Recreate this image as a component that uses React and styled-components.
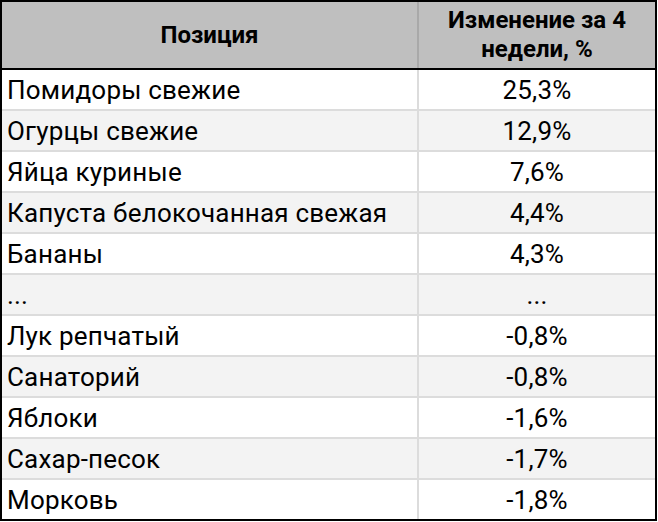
import React from "react";
import styled, { createGlobalStyle } from "styled-components";

const Global = createGlobalStyle`
  html, body { margin: 0; padding: 0; background: #fff; }
  body { font-family: Roboto, "Liberation Sans", sans-serif; }
`;

const Table = styled.div`
  width: 657px;
  box-sizing: border-box;
  border: 2px solid #000;
  display: flex;
  flex-direction: column;
  color: #000;
`;

const Row = styled.div`
  display: grid;
  grid-template-columns: 417px 1fr;
  height: ${(p) => (p.$head ? "66px" : "39px")};
  background: ${(p) => (p.$head ? "#bfbfbf" : p.$alt ? "#f3f3f3" : "#fff")};
  border-bottom: ${(p) =>
    p.$head ? "2px solid #000" : p.$last ? "none" : "2px solid #dcdcdc"};
`;

const Cell = styled.div`
  display: flex;
  align-items: center;
  justify-content: ${(p) => (p.$center ? "center" : "flex-start")};
  padding: ${(p) => (p.$center ? "0" : "0 0 0 5px")};
  border-right: ${(p) =>
    p.$divider ? `2px solid ${p.$head ? "#a9a9a9" : "#dcdcdc"}` : "none"};
  font-size: 26px;
  letter-spacing: 0.2px;
  white-space: nowrap;
`;

const HeadCell = styled(Cell)`
  font-weight: 700;
  font-size: 24px;
  letter-spacing: 0;
  line-height: 29px;
  text-align: center;
`;

const rows = [
  ["Помидоры свежие", "25,3%"],
  ["Огурцы свежие", "12,9%"],
  ["Яйца куриные", "7,6%"],
  ["Капуста белокочанная свежая", "4,4%"],
  ["Бананы", "4,3%"],
  ["...", "..."],
  ["Лук репчатый", "-0,8%"],
  ["Санаторий", "-0,8%"],
  ["Яблоки", "-1,6%"],
  ["Сахар-песок", "-1,7%"],
  ["Морковь", "-1,8%"],
];

export default function App() {
  return (
    <>
      <Global />
      <Table>
        <Row $head>
          <HeadCell $center $divider $head>
            Позиция
          </HeadCell>
          <HeadCell $center $head>
            Изменение за 4
            <br />
            недели, %
          </HeadCell>
        </Row>
        {rows.map(([name, val], i) => (
          <Row key={i} $alt={i % 2 === 1} $last={i === rows.length - 1}>
            <Cell $divider>{name}</Cell>
            <Cell $center>{val}</Cell>
          </Row>
        ))}
      </Table>
    </>
  );
}
